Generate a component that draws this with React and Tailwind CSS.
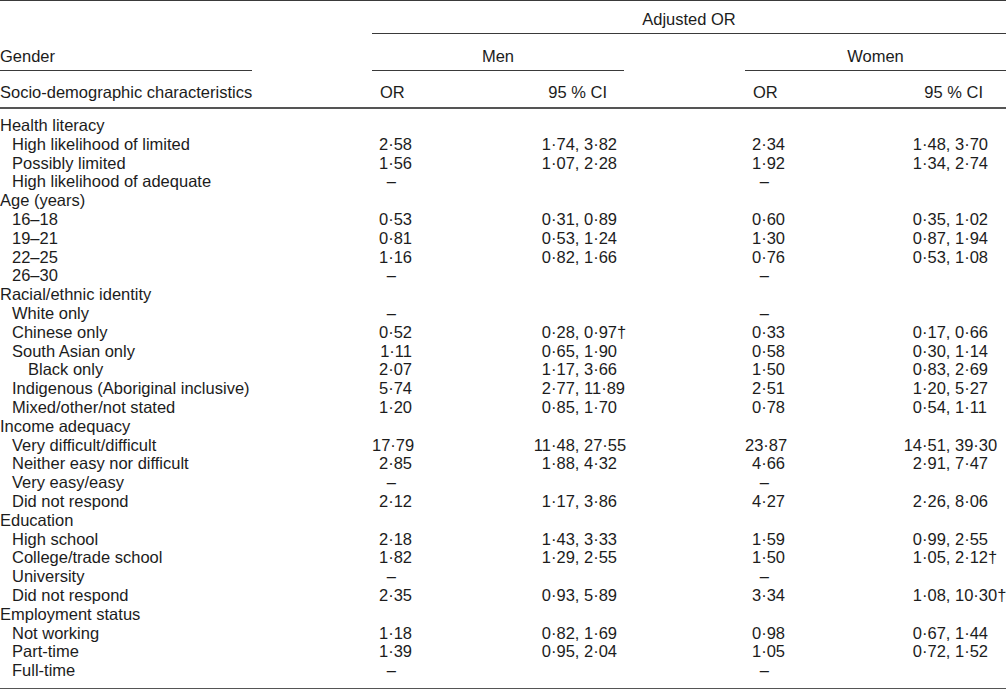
const rows = [
  { label: "Health literacy", level: 0 },
  { label: "High likelihood of limited", level: 1, m: "2·58", mci: "1·74, 3·82", w: "2·34", wci: "1·48, 3·70" },
  { label: "Possibly limited", level: 1, m: "1·56", mci: "1·07, 2·28", w: "1·92", wci: "1·34, 2·74" },
  { label: "High likelihood of adequate", level: 1, m: "–", w: "–" },
  { label: "Age (years)", level: 0 },
  { label: "16–18", level: 1, m: "0·53", mci: "0·31, 0·89", w: "0·60", wci: "0·35, 1·02" },
  { label: "19–21", level: 1, m: "0·81", mci: "0·53, 1·24", w: "1·30", wci: "0·87, 1·94" },
  { label: "22–25", level: 1, m: "1·16", mci: "0·82, 1·66", w: "0·76", wci: "0·53, 1·08" },
  { label: "26–30", level: 1, m: "–", w: "–" },
  { label: "Racial/ethnic identity", level: 0 },
  { label: "White only", level: 1, m: "–", w: "–" },
  { label: "Chinese only", level: 1, m: "0·52", mci: "0·28, 0·97†", w: "0·33", wci: "0·17, 0·66" },
  { label: "South Asian only", level: 1, m: "1·11", mci: "0·65, 1·90", w: "0·58", wci: "0·30, 1·14" },
  { label: "Black only", level: 2, m: "2·07", mci: "1·17, 3·66", w: "1·50", wci: "0·83, 2·69" },
  { label: "Indigenous (Aboriginal inclusive)", level: 1, m: "5·74", mci: "2·77, 11·89", w: "2·51", wci: "1·20, 5·27" },
  { label: "Mixed/other/not stated", level: 1, m: "1·20", mci: "0·85, 1·70", w: "0·78", wci: "0·54, 1·11" },
  { label: "Income adequacy", level: 0 },
  { label: "Very difficult/difficult", level: 1, m: "17·79", mci: "11·48, 27·55", w: "23·87", wci: "14·51, 39·30" },
  { label: "Neither easy nor difficult", level: 1, m: "2·85", mci: "1·88, 4·32", w: "4·66", wci: "2·91, 7·47" },
  { label: "Very easy/easy", level: 1, m: "–", w: "–" },
  { label: "Did not respond", level: 1, m: "2·12", mci: "1·17, 3·86", w: "4·27", wci: "2·26, 8·06" },
  { label: "Education", level: 0 },
  { label: "High school", level: 1, m: "2·18", mci: "1·43, 3·33", w: "1·59", wci: "0·99, 2·55" },
  { label: "College/trade school", level: 1, m: "1·82", mci: "1·29, 2·55", w: "1·50", wci: "1·05, 2·12†" },
  { label: "University", level: 1, m: "–", w: "–" },
  { label: "Did not respond", level: 1, m: "2·35", mci: "0·93, 5·89", w: "3·34", wci: "1·08, 10·30†" },
  { label: "Employment status", level: 0 },
  { label: "Not working", level: 1, m: "1·18", mci: "0·82, 1·69", w: "0·98", wci: "0·67, 1·44" },
  { label: "Part-time", level: 1, m: "1·39", mci: "0·95, 2·04", w: "1·05", wci: "0·72, 1·52" },
  { label: "Full-time", level: 1, m: "–", w: "–" },
];

const cols = "grid grid-cols-[372px_128px_124px_121px_128px_133px]";

const OrCell = ({ v }) => {
  if (!v) return <div />;
  if (v === "–") return <div className="w-[40px] text-right pr-[16px]">–</div>;
  return <div className="w-[40px] text-right whitespace-nowrap">{v}</div>;
};

// first number is decimal-aligned, the rest just follows
const CiCell = ({ v, box }) => {
  if (!v) return <div />;
  const int = v.split("·")[0];
  return (
    <div className="whitespace-nowrap">
      <span className={`inline-block text-right ${box}`}>{int}</span>
      {v.slice(int.length)}
    </div>
  );
};

const indent = ["pl-0", "pl-[12px]", "pl-[28px]"];

export default function App() {
  return (
    <div className="w-[1006px] h-[689px] bg-white overflow-hidden font-['Liberation_Sans',Arial,sans-serif] text-[16.5px] leading-[19px] text-[#1c1c1c]">
      <div className="border-t border-[#3a3a3a] border-b-2 border-b-[#555]">
        <div className={cols}>
          <div />
          <div className="col-span-5 text-center pt-[9px] pb-[4px] border-b border-[#3a3a3a]">Adjusted OR</div>
        </div>
        <div className={cols}>
          <div className="pt-[13px]">
            <div className="w-[252px] pb-[4px] border-b border-[#3a3a3a]">Gender</div>
          </div>
          <div className="col-span-2 text-center pt-[13px] pb-[4px] border-b border-[#3a3a3a]">Men</div>
          <div />
          <div className="col-span-2 text-center pt-[13px] pb-[4px] border-b border-[#3a3a3a]">Women</div>
        </div>
        <div className={`${cols} pt-[12px] pb-[5px]`}>
          <div>Socio-demographic characteristics</div>
          <div className="pl-[8px]">OR</div>
          <div className="text-right pr-[17px]">95 % CI</div>
          <div />
          <div className="pl-[8px]">OR</div>
          <div className="text-right pr-[23px]">95 % CI</div>
        </div>
      </div>
      <div className="pt-[7px] pb-[8px] border-b-2 border-[#555] leading-[18.8px]">
        {rows.map((r, i) => (
          <div key={i} className={cols}>
            <div className={indent[r.level]}>{r.label}</div>
            <OrCell v={r.m} />
            <CiCell v={r.mci} box="w-[51px]" />
            <div />
            <OrCell v={r.w} />
            <CiCell v={r.wci} box="w-[49px]" />
          </div>
        ))}
      </div>
    </div>
  );
}
